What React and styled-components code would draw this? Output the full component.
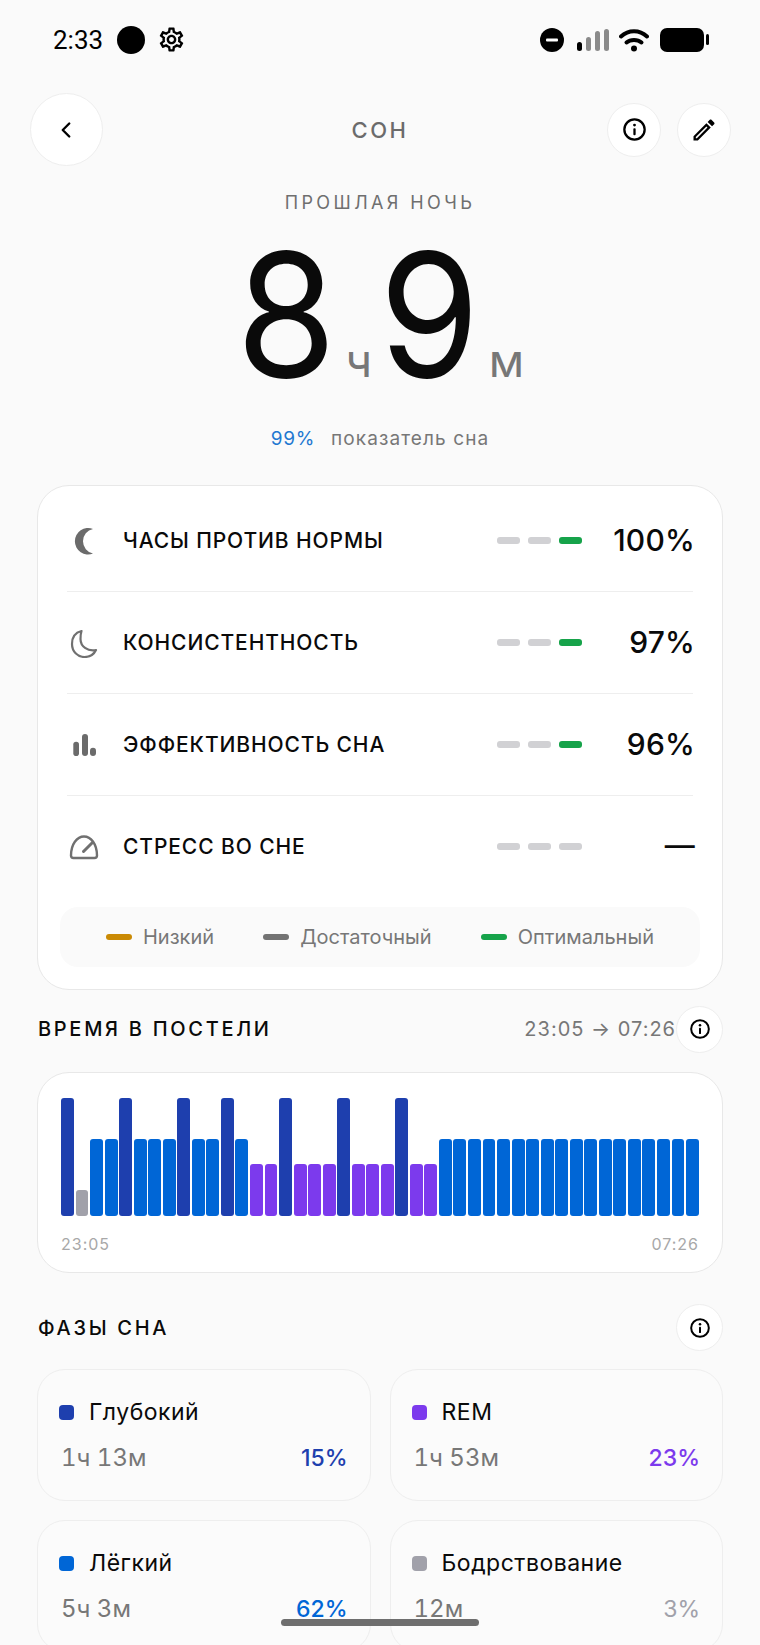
import React from "react";
import styled, { createGlobalStyle } from "styled-components";
import { MdOutlineSettings, MdOutlineEdit } from "react-icons/md";
import { ChevronLeft } from "lucide-react";

const DEEP = "#1e3fae";
const LIGHT = "#0066d6";
const REM = "#7c3aed";
const AWAKE = "#a1a1aa";
const GREEN = "#16a34a";

const phaseColors = { D: DEEP, L: LIGHT, P: REM, A: AWAKE };
const phaseHeights = { D: 118, L: 77, P: 52, A: 26 };
const sleepBars = "DALLDLLLDLLDLPPDPPPDPPPDPP" + "L".repeat(18);

const metrics = [
  { icon: "filledMoon", label: "ЧАСЫ ПРОТИВ НОРМЫ", value: "100%", good: true },
  { icon: "moon", label: "КОНСИСТЕНТНОСТЬ", value: "97%", good: true },
  { icon: "bars", label: "ЭФФЕКТИВНОСТЬ СНА", value: "96%", good: true },
  { icon: "gauge", label: "СТРЕСС ВО СНЕ", value: "—", good: false },
];

const phases = [
  { name: "Глубокий", time: "1ч 13м", pct: "15%", color: DEEP },
  { name: "REM", time: "1ч 53м", pct: "23%", color: REM },
  { name: "Лёгкий", time: "5ч 3м", pct: "62%", color: LIGHT },
  { name: "Бодрствование", time: "12м", pct: "3%", color: AWAKE, quiet: true },
];

const InfoIcon = ({ size }) => (
  <svg width={size} height={size} viewBox="0 0 24 24">
    <circle cx="12" cy="12" r="10.6" fill="none" stroke="#000" strokeWidth="2.4" />
    <circle cx="12" cy="7.4" r="1.5" fill="#000" />
    <rect x="10.8" y="10.6" width="2.4" height="7.4" rx="1" fill="#000" />
  </svg>
);

const MetricIcon = ({ name }) => {
  if (name === "filledMoon") {
    return (
      <svg width="30" height="30" viewBox="0 0 30 30">
        <path d="M24 3A13.2 13.2 0 1 0 24 27.5A12.5 12.5 0 0 1 24 3Z" fill="#6b6b6b" />
      </svg>
    );
  }
  if (name === "moon") {
    return (
      <svg width="30" height="30" viewBox="0 0 30 30">
        <path
          d="M12.5 3C6.5 4.5 3 9.5 3 16c0 7.5 5.5 13 12.5 13 5 0 9.5-2.8 11.5-7-8.5 1.5-15.5-3.5-15.500-11 0-3 .2-5.500 1-8Z"
          fill="none"
          stroke="#707070"
          strokeWidth="2.2"
          strokeLinejoin="round"
        />
      </svg>
    );
  }
  if (name === "bars") {
    return (
      <svg width="30" height="30" viewBox="0 0 30 30">
        <rect x="4.3" y="11.7" width="5.7" height="14.3" rx="2.8" fill="#6b6b6b" />
        <rect x="13" y="4" width="6" height="22" rx="3" fill="#6b6b6b" />
        <rect x="21" y="17.7" width="6" height="8.3" rx="3" fill="#6b6b6b" />
      </svg>
    );
  }
  return (
    <svg width="30" height="30" viewBox="0 0 30 30">
      <path
        d="M4.5 27h21a2.5 2.5 0 0 0 2.5-2.5C28 13 22 5.5 15 5.5S2 13 2 24.5A2.5 2.5 0 0 0 4.5 27Z"
        fill="none"
        stroke="#707070"
        strokeWidth="2.4"
        strokeLinejoin="round"
      />
      <path d="M14.5 20.5 23.5 11.5" stroke="#707070" strokeWidth="3" strokeLinecap="round" />
    </svg>
  );
};

const App = () => {
  return (
    <Screen>
      <GlobalStyle />
      <StatusBar>
        <StatusLeft>
          <Clock>2:33</Clock>
          <CameraDot />
          <MdOutlineSettings size={29} color="#000" />
        </StatusLeft>
        <StatusRight>
          <svg width="27" height="24" viewBox="0 0 27 24">
            <circle cx="12" cy="12" r="12" fill="#000" />
            <rect x="6" y="10.5" width="12" height="3" rx="1" fill="#fff" />
          </svg>
          <svg width="32" height="24" viewBox="0 0 32 24">
            <rect x="0" y="14" width="5" height="9" rx="2.5" fill="#000" />
            <rect x="9" y="9" width="5" height="14" rx="2.5" fill="#8a8a8a" />
            <rect x="18" y="3" width="5" height="20" rx="2.5" fill="#8a8a8a" />
            <rect x="27" y="1" width="5" height="22" rx="2.5" fill="#8a8a8a" />
          </svg>
          <svg width="30" height="24" viewBox="0 0 30 24">
            <path d="M2 8.5C9.5 1.5 20.5 1.5 28 8.5" fill="none" stroke="#000" strokeWidth="4" strokeLinecap="round" />
            <path d="M7.5 14.5C11.5 11 18.5 11 22.5 14.5" fill="none" stroke="#000" strokeWidth="4" strokeLinecap="round" />
            <circle cx="15" cy="20.5" r="3" fill="#000" />
          </svg>
          <Battery />
        </StatusRight>
      </StatusBar>

      <Header>
        <BackButton>
          <ChevronLeft size={26} color="#000" strokeWidth={2.2} />
        </BackButton>
        <Title>СОН</Title>
        <HeaderActions>
          <RoundButton>
            <InfoIcon size={23} />
          </RoundButton>
          <RoundButton>
            <MdOutlineEdit size={28} color="#000" />
          </RoundButton>
        </HeaderActions>
      </Header>

      <Hero>
        <Overline>ПРОШЛАЯ НОЧЬ</Overline>
        <Duration>
          <BigNumber>8</BigNumber>
          <Unit>ч</Unit>
          <BigNumber>9</BigNumber>
          <MinuteUnit>м</MinuteUnit>
        </Duration>
        <Score>
          <ScoreValue>99%</ScoreValue>
          <span>показатель сна</span>
        </Score>
      </Hero>

      <Content>
        <MetricsCard>
          {metrics.map((m) => (
            <MetricRow key={m.label}>
              <IconSlot>
                <MetricIcon name={m.icon} />
              </IconSlot>
              <MetricLabel>{m.label}</MetricLabel>
              <Segments>
                <Segment />
                <Segment />
                <Segment $on={m.good} />
              </Segments>
              <MetricValue>{m.value}</MetricValue>
            </MetricRow>
          ))}
          <Legend>
            <LegendItem>
              <LegendBar $color="#ca8a04" />
              Низкий
            </LegendItem>
            <LegendItem>
              <LegendBar $color="#737373" />
              Достаточный
            </LegendItem>
            <LegendItem>
              <LegendBar $color={GREEN} />
              Оптимальный
            </LegendItem>
          </Legend>
        </MetricsCard>

        <BedHeader>
          <SectionTitle>ВРЕМЯ В ПОСТЕЛИ</SectionTitle>
          <BedRange>
            <RangeText>23:05 → 07:26</RangeText>
            <SmallRound>
              <InfoIcon size={20} />
            </SmallRound>
          </BedRange>
        </BedHeader>

        <ChartCard>
          <Bars>
            {sleepBars.split("").map((p, i) => (
              <Bar key={i} $color={phaseColors[p]} $height={phaseHeights[p]} />
            ))}
          </Bars>
          <ChartLabels>
            <span>23:05</span>
            <span>07:26</span>
          </ChartLabels>
        </ChartCard>

        <PhasesHeader>
          <SectionTitle>ФАЗЫ СНА</SectionTitle>
          <SmallRound>
            <InfoIcon size={20} />
          </SmallRound>
        </PhasesHeader>

        <PhaseGrid>
          {phases.map((p) => (
            <PhaseCard key={p.name}>
              <PhaseName>
                <PhaseDot $color={p.color} />
                {p.name}
              </PhaseName>
              <PhaseStats>
                <PhaseTime>{p.time}</PhaseTime>
                <PhasePct $color={p.color} $quiet={p.quiet}>
                  {p.pct}
                </PhasePct>
              </PhaseStats>
            </PhaseCard>
          ))}
        </PhaseGrid>
      </Content>

      <HomeIndicator />
    </Screen>
  );
};

export default App;

const GlobalStyle = createGlobalStyle`
  html, body {
    margin: 0;
    padding: 0;
    background: #fafafa;
  }
  * {
    box-sizing: border-box;
  }
`;

const Screen = styled.div`
  position: relative;
  width: 760px;
  height: 1645px;
  overflow: hidden;
  background: #fafafa;
  font-family: Inter, "Noto Sans", sans-serif;
  color: #0a0a0a;
  padding-top: 26px;
`;

const StatusBar = styled.div`
  display: flex;
  justify-content: space-between;
  align-items: center;
  height: 27px;
  padding: 0 50px 0 53px;
`;

const StatusLeft = styled.div`
  display: flex;
  align-items: center;
  gap: 14px;
`;

const Clock = styled.span`
  font-family: Roboto, sans-serif;
  font-size: 26px;
  color: #000;
`;

const CameraDot = styled.span`
  width: 28px;
  height: 28px;
  margin-right: -2px;
  border-radius: 50%;
  background: #000;
`;

const StatusRight = styled.div`
  display: flex;
  align-items: center;
  gap: 10px;
`;

const Battery = styled.span`
  position: relative;
  width: 44px;
  height: 24px;
  margin-left: 1px;
  margin-right: 6px;
  border-radius: 7px;
  background: #000;

  &::after {
    content: "";
    position: absolute;
    top: 6px;
    right: -5px;
    width: 3px;
    height: 11px;
    border-radius: 2px;
    background: #000;
  }
`;

const Header = styled.div`
  position: relative;
  display: flex;
  justify-content: space-between;
  align-items: center;
  margin-top: 40px;
  padding: 0 29px 0 30px;
  height: 73px;
`;

const BackButton = styled.div`
  display: flex;
  align-items: center;
  justify-content: center;
  width: 73px;
  height: 73px;
  padding-right: 2px;
  border-radius: 50%;
  background: #fff;
  border: 1px solid #eeeeee;
`;

const Title = styled.div`
  position: absolute;
  left: 0;
  right: 0;
  text-align: center;
  font-size: 22px;
  font-weight: 500;
  letter-spacing: 2.5px;
  color: #6b6b6b;
`;

const HeaderActions = styled.div`
  display: flex;
  gap: 16px;
`;

const RoundButton = styled.div`
  display: flex;
  align-items: center;
  justify-content: center;
  width: 54px;
  height: 54px;
  border-radius: 50%;
  background: #fff;
  border: 1px solid #eeeeee;
`;

const Hero = styled.div`
  display: flex;
  flex-direction: column;
  align-items: center;
  margin-top: 26px;
`;

const Overline = styled.div`
  font-size: 18px;
  line-height: 22px;
  letter-spacing: 3.4px;
  color: #6f6f6f;
`;

const Duration = styled.div`
  display: flex;
  align-items: baseline;
  margin-top: 14px;
`;

const BigNumber = styled.span`
  margin: 0 -3px;
  font-size: 172px;
  line-height: 1;
  font-weight: 400;
  color: #0a0a0a;
  transform: scaleX(0.94);
`;

const Unit = styled.span`
  margin: 0 7px 0 9px;
  font-size: 46px;
  line-height: 1;
  color: #777777;
`;

const MinuteUnit = styled(Unit)`
  margin: 0 0 0 9px;
`;

const Score = styled.div`
  display: flex;
  gap: 16px;
  margin-top: 27px;
  font-size: 19px;
  line-height: 24px;
  letter-spacing: 1.1px;
  color: #777777;
`;

const ScoreValue = styled.span`
  letter-spacing: 0.7px;
  color: #1f78d1;
`;

const Content = styled.div`
  padding: 0 37px;
  margin-top: 34px;
`;

const MetricsCard = styled.div`
  padding: 4px 22px 22px;
  border: 1px solid #e8e8e8;
  border-radius: 32px;
  background: #fff;
`;

const MetricRow = styled.div`
  display: flex;
  align-items: center;
  height: 102px;
  margin: 0 7px;
  border-bottom: 1px solid #eeeeee;

  &:nth-of-type(4) {
    height: 100px;
    border-bottom: none;
  }
`;

const IconSlot = styled.div`
  display: flex;
  justify-content: center;
  width: 34px;
  margin-right: 22px;
`;

const MetricLabel = styled.div`
  flex: 1;
  font-size: 21px;
  font-weight: 500;
  letter-spacing: 0.9px;
`;

const Segments = styled.div`
  display: flex;
  gap: 8px;
`;

const Segment = styled.span`
  width: 23px;
  height: 7px;
  border-radius: 3px;
  background: ${({ $on }) => ($on ? GREEN : "#d1d1d4")};
`;

const MetricValue = styled.div`
  width: 113px;
  margin-right: -2px;
  margin-top: -2px;
  text-align: right;
  font-size: 30px;
  font-weight: 450;
  letter-spacing: 0.2px;
`;

const Legend = styled.div`
  display: flex;
  justify-content: space-between;
  align-items: center;
  height: 60px;
  margin-top: 11px;
  padding: 0 46px;
  border-radius: 18px;
  background: #fafafa;
`;

const LegendItem = styled.div`
  display: flex;
  align-items: center;
  gap: 11px;
  font-size: 20px;
  color: #777777;
`;

const LegendBar = styled.span`
  width: 26px;
  height: 6px;
  border-radius: 3px;
  background: ${({ $color }) => $color};
`;

const BedHeader = styled.div`
  display: flex;
  justify-content: space-between;
  align-items: center;
  margin-top: 16px;
  height: 46px;
`;

const SectionTitle = styled.div`
  padding-left: 1px;
  font-size: 20px;
  font-weight: 500;
  letter-spacing: 2.7px;
`;

const BedRange = styled.div`
  display: flex;
  align-items: center;
`;

const RangeText = styled.span`
  font-size: 20px;
  letter-spacing: 1px;
  color: #777777;
`;

const SmallRound = styled.div`
  display: flex;
  align-items: center;
  justify-content: center;
  width: 47px;
  height: 47px;
  border-radius: 50%;
  background: #fff;
  border: 1px solid #eeeeee;
`;

const ChartCard = styled.div`
  height: 201px;
  margin-top: 20px;
  padding: 25px 23px 0;
  border: 1px solid #e8e8e8;
  border-radius: 32px;
  background: #fff;
`;

const Bars = styled.div`
  display: grid;
  grid-template-columns: repeat(44, 1fr);
  column-gap: 1.6px;
  align-items: end;
  height: 118px;
`;

const Bar = styled.span`
  height: ${({ $height }) => $height}px;
  border-radius: 3px;
  background: ${({ $color }) => $color};
`;

const ChartLabels = styled.div`
  display: flex;
  justify-content: space-between;
  margin-top: 18px;
  font-size: 16px;
  letter-spacing: 1px;
  color: #a8a8a8;
`;

const PhasesHeader = styled.div`
  display: flex;
  justify-content: space-between;
  align-items: center;
  margin-top: 31px;
  height: 47px;
`;

const PhaseGrid = styled.div`
  display: grid;
  grid-template-columns: 1fr 1fr;
  gap: 19px;
  margin-top: 18px;
`;

const PhaseCard = styled.div`
  height: 132px;
  padding: 27px 22px 0 21px;
  border: 1px solid #eeeeee;
  border-radius: 28px;
  background: #fbfbfb;
`;

const PhaseName = styled.div`
  display: flex;
  align-items: center;
  gap: 15px;
  font-size: 23px;
  line-height: 30px;
  letter-spacing: 0.5px;
`;

const PhaseDot = styled.span`
  width: 15px;
  height: 15px;
  border-radius: 4px;
  background: ${({ $color }) => $color};
`;

const PhaseStats = styled.div`
  display: flex;
  justify-content: space-between;
  align-items: center;
  margin-top: 16px;
  padding-left: 2px;
  font-size: 24px;
  line-height: 30px;
`;

const PhaseTime = styled.span`
  color: #777777;
  font-variant-numeric: tabular-nums;
`;

const PhasePct = styled.span`
  font-size: 23px;
  font-weight: ${({ $quiet }) => ($quiet ? 400 : 550)};
  color: ${({ $color }) => $color};
`;

const HomeIndicator = styled.div`
  position: absolute;
  left: 281px;
  top: 1619px;
  width: 198px;
  height: 7px;
  border-radius: 4px;
  background: #6e6e6e;
`;
